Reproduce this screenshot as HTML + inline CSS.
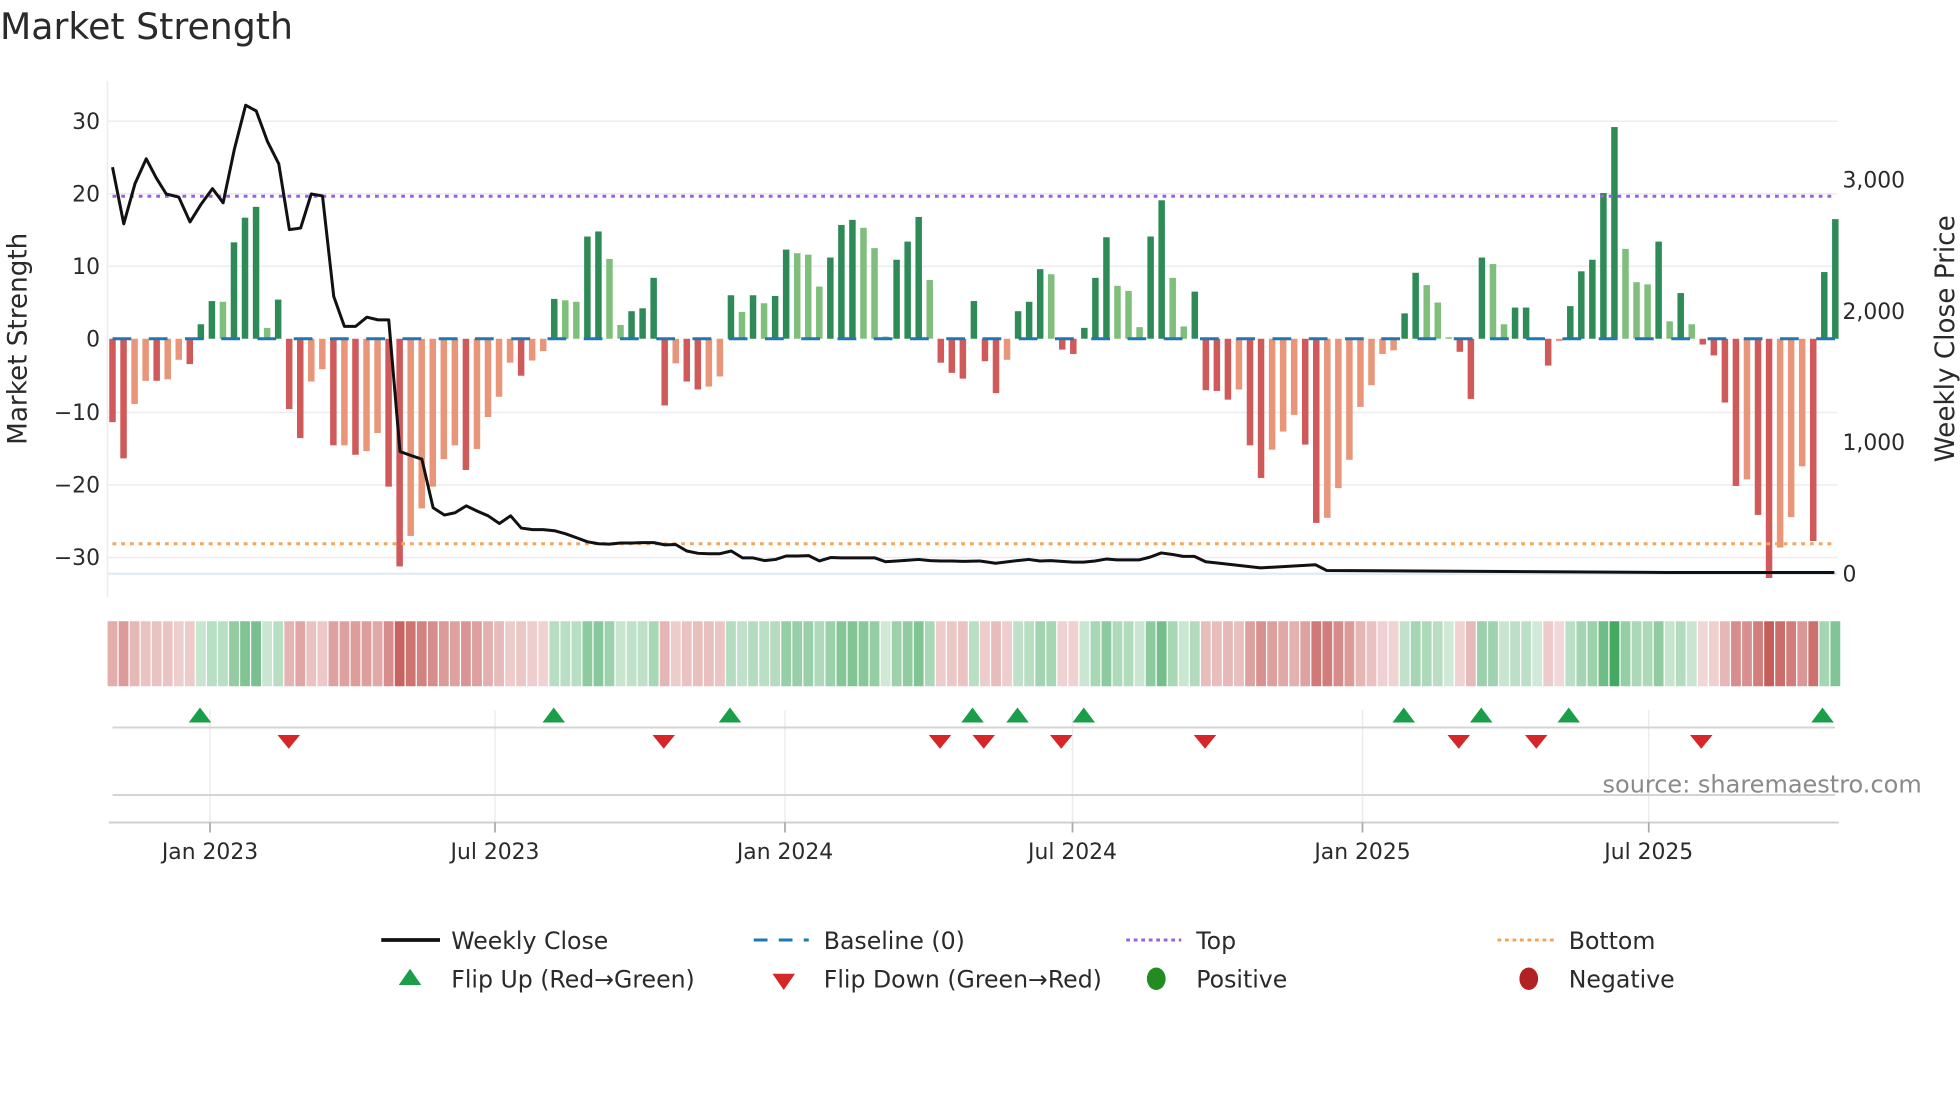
<!DOCTYPE html>
<html><head><meta charset="utf-8"><style>
html,body{margin:0;padding:0;background:#fff;width:1960px;height:1102px;overflow:hidden}
svg{display:block}
text{font-family:"DejaVu Sans","Liberation Sans",sans-serif;fill:#2a2a2a}
</style></head><body>
<svg id="s" width="1960" height="1102" viewBox="0 0 1568 881.6" xmlns="http://www.w3.org/2000/svg">
<text x="0" y="31" font-size="29">Market Strength</text>
<g stroke="#ececf2" stroke-width="1.2">
<line x1="86" y1="97" x2="1470" y2="97"/><line x1="86" y1="155" x2="1470" y2="155"/>
<line x1="86" y1="213" x2="1470" y2="213"/><line x1="86" y1="330" x2="1470" y2="330"/>
<line x1="86" y1="388" x2="1470" y2="388"/><line x1="86" y1="446" x2="1470" y2="446"/>
<line x1="86" y1="459" x2="1470" y2="459" stroke="#e4ecf2" stroke-width="2"/>
<line x1="86" y1="65" x2="86" y2="478"/>
</g>
<g font-size="17.5" text-anchor="end">
<text x="80" y="103">30</text><text x="80" y="161">20</text><text x="80" y="219">10</text>
<text x="80" y="277">0</text><text x="80" y="336">−10</text><text x="80" y="394">−20</text><text x="80" y="452">−30</text>
</g>
<g font-size="17.5">
<text x="1474" y="150">3,000</text><text x="1474" y="255">2,000</text><text x="1474" y="360">1,000</text><text x="1474" y="465">0</text>
</g>
<text transform="translate(21,271) rotate(-90)" font-size="21" text-anchor="middle">Market Strength</text>
<text transform="translate(1563,271) rotate(-90)" font-size="21" text-anchor="middle">Weekly Close Price</text>
<g id="bars"></g>
<line x1="90" y1="271" x2="1468" y2="271" stroke="#1f77b4" stroke-width="2.4" stroke-dasharray="15 14"/>
<line x1="90" y1="157" x2="1468" y2="157" stroke="#9b5fe0" stroke-width="2.4" stroke-dasharray="3 4"/>
<line x1="90" y1="435" x2="1468" y2="435" stroke="#f2a55a" stroke-width="2.4" stroke-dasharray="3 4"/>
<polyline transform="scale(0.5,0.30612)" vector-effect="non-scaling-stroke" fill="none" stroke="#111" stroke-width="3" stroke-linejoin="round" points="180,437 198,585 216,480 234,415 250,465 266,507 286,515 304,580 322,533 340,493 357,530 375,390 393,275 410,290 428,370 446,428 463,600 481,596 498,507 516,512 534,775 551,853 569,853 587,829 605,836 622,836 640,1180 657,1190 675,1200 693,1327 711,1346 728,1340 746,1322 764,1336 781,1348 799,1368 817,1348 834,1380 852,1384 869,1384 887,1387 905,1395 922,1405 940,1416 958,1421 975,1422 993,1419 1011,1419 1028,1418 1046,1418 1064,1424 1081,1423 1099,1440 1117,1446 1134,1447 1152,1447 1170,1440 1188,1458 1205,1458 1223,1465 1241,1462 1258,1453 1276,1453 1294,1452 1311,1466 1329,1457 1346,1458 1364,1458 1382,1458 1400,1458 1417,1468 1435,1466 1452,1464 1470,1462 1488,1465 1505,1466 1523,1466 1541,1467 1568,1466"/>
<polyline transform="translate(784,0) scale(0.5,0.30612)" vector-effect="non-scaling-stroke" fill="none" stroke="#111" stroke-width="3" stroke-linejoin="round" points="0,1466 25,1472 60,1465 78,1462 96,1466 113,1465 131,1467 149,1469 166,1469 184,1466 202,1461 219,1463 255,1463 272,1456 290,1445 308,1449 325,1454 343,1454 361,1468 378,1471 449,1484 537,1476 555,1491 1100,1496 1367,1496"/>
<g id="heat"></g>
<g stroke="#ececf0" stroke-width="1.2">
<line x1="168" y1="568" x2="168" y2="658"/><line x1="396" y1="568" x2="396" y2="658"/>
<line x1="628" y1="568" x2="628" y2="658"/><line x1="858" y1="568" x2="858" y2="658"/>
<line x1="1090" y1="568" x2="1090" y2="658"/><line x1="1319" y1="568" x2="1319" y2="658"/>
</g>
<line x1="90" y1="582" x2="1468" y2="582" stroke="#d4d4d4" stroke-width="1.6"/>
<line x1="90" y1="636" x2="1468" y2="636" stroke="#d4d4d4" stroke-width="1.6"/>
<line x1="87" y1="658" x2="1471" y2="658" stroke="#cfcfcf" stroke-width="1.6"/>
<g stroke="#aaa" stroke-width="1.4">
<line x1="168" y1="658" x2="168" y2="666"/><line x1="396" y1="658" x2="396" y2="666"/>
<line x1="628" y1="658" x2="628" y2="666"/><line x1="858" y1="658" x2="858" y2="666"/>
<line x1="1090" y1="658" x2="1090" y2="666"/><line x1="1319" y1="658" x2="1319" y2="666"/>
</g>
<g id="tri"></g>
<text x="1282" y="634" font-size="19.2" style="fill:#8a8a8a">source: sharemaestro.com</text>
<g font-size="17.5" text-anchor="middle">
<text x="168" y="687">Jan 2023</text><text x="396" y="687">Jul 2023</text><text x="628" y="687">Jan 2024</text>
<text x="858" y="687">Jul 2024</text><text x="1090" y="687">Jan 2025</text><text x="1319" y="687">Jul 2025</text>
</g>
<g font-size="18.9">
<line x1="305" y1="752" x2="352" y2="752" stroke="#111" stroke-width="3"/>
<text x="361" y="759">Weekly Close</text>
<line x1="603" y1="752" x2="647" y2="752" stroke="#1f77b4" stroke-width="2.4" stroke-dasharray="11 9"/>
<text x="659" y="759">Baseline (0)</text>
<line x1="901" y1="752" x2="945" y2="752" stroke="#9b5fe0" stroke-width="2.4" stroke-dasharray="3 3"/>
<text x="957" y="759">Top</text>
<line x1="1198" y1="752" x2="1243" y2="752" stroke="#f2a55a" stroke-width="2.4" stroke-dasharray="3 3"/>
<text x="1255" y="759">Bottom</text>
<polygon points="328,775 319,788 337,788" fill="#1a9e49"/>
<text x="361" y="790">Flip Up (Red→Green)</text>
<polygon points="618,779 636,779 627,792" fill="#d62728"/>
<text x="659" y="790">Flip Down (Green→Red)</text>
<ellipse cx="925" cy="783" rx="7.5" ry="9" fill="#228b22"/>
<text x="957" y="790">Positive</text>
<ellipse cx="1223" cy="783" rx="7.5" ry="9" fill="#b22222"/>
<text x="1255" y="790">Negative</text>
</g>
</svg>
<script>
var d="-11.5R -16.5R -9r -5.8r -5.8R -5.6r -2.9r -3.5R 2G 5.2G 5.1g 13.3G 16.7G 18.2G 1.5g 5.4G -9.7R -13.7R -5.9r -4.2r -14.7R -14.7r -16R -15.5r -13r -20.4R -31.4R -27.2r -23.4r -20.4r -16.6r -14.7r -18.1R -15.2r -10.8r -8r -3.3r -5.1R -3r -1.7r 5.5G 5.3g 5.1g 14.1G 14.8G 11g 1.9g 3.8G 4.2G 8.4G -9.2R -3.4r -5.9R -7R -6.6r -5.2r 6G 3.7g 6G 4.9g 5.9G 12.3G 11.8g 11.6g 7.2g 11.2G 15.7G 16.4G 15.3g 12.5g 0.3g 10.9G 13.4G 16.8G 8.1g -3.3R -4.7R -5.5R 5.2G -3.1R -7.5R -2.9r 3.8G 5.1G 9.6G 8.9g -1.5R -2.1R 1.5G 8.4G 14G 7.3g 6.6g 1.6g 14.1G 19.1G 8.4g 1.7g 6.5G -7.1R -7.2R -8.4R -7r -14.7R -19.2R -15.3r -12.8r -10.5r -14.6R -25.4R -24.7r -20.6r -16.7r -9.4r -6.4r -2.1r -1.6r 3.5G 9.1G 7.4g 5g 0.2g -1.8R -8.3R 11.2G 10.3g 2g 4.3G 4.3G 0.1G -3.7R -0.3r 4.5G 9.3G 10.9G 20.1G 29.2G 12.4g 7.8g 7.5g 13.4G 2.4g 6.3G 2g -0.8R -2.3R -8.8R -20.3R -19.4r -24.3R -33R -28.8r -24.6r -17.6r -27.9R 9.2G 16.5G".split(" ");
var C={G:"#2e8b57",g:"#7fbf7b",R:"#d05a5a",r:"#e8957a"};
var ns="http://www.w3.org/2000/svg",b=document.getElementById("bars"),h=document.getElementById("heat"),t=document.getElementById("tri");
function mk(p,tag,a){var e=document.createElementNS(ns,tag);for(var k in a)e.setAttribute(k,a[k]);p.appendChild(e);}
function mix(c,w){var r=parseInt(c.substr(1,2),16),g=parseInt(c.substr(3,2),16),bb=parseInt(c.substr(5,2),16);
return "rgb("+Math.round(255+(r-255)*w)+","+Math.round(255+(g-255)*w)+","+Math.round(255+(bb-255)*w)+")";}
var step=8.835;
d.forEach(function(s,i){var v=parseFloat(s),ty=s.slice(-1),x=90+step*i;
var y0=271,hh=Math.abs(v)*5.8;
mk(b,"rect",{x:x-2.6,y:v>=0?y0-hh:y0,width:5.2,height:Math.max(hh,0.5),fill:C[ty]});
var w,c;if(v>=0){w=0.22+0.7*Math.min(v/30,1);c="#2f9e4f";}else{w=0.22+0.7*Math.min(-v/33,1);c="#c0504d";}
mk(h,"rect",{x:x-4.4+0.5,y:497,width:step-1,height:52,fill:mix(c,w)});
});
[160,443,584,778,814,867,1123,1185,1255,1458].forEach(function(x){mk(t,"polygon",{points:(x)+",566 "+(x-9)+",578 "+(x+9)+",578",fill:"#1a9e49"});});
[231,531,752,787,849,964,1167,1229,1361].forEach(function(x){mk(t,"polygon",{points:(x-9)+",588 "+(x+9)+",588 "+x+",599",fill:"#d62728"});});
</script>
</body></html>
